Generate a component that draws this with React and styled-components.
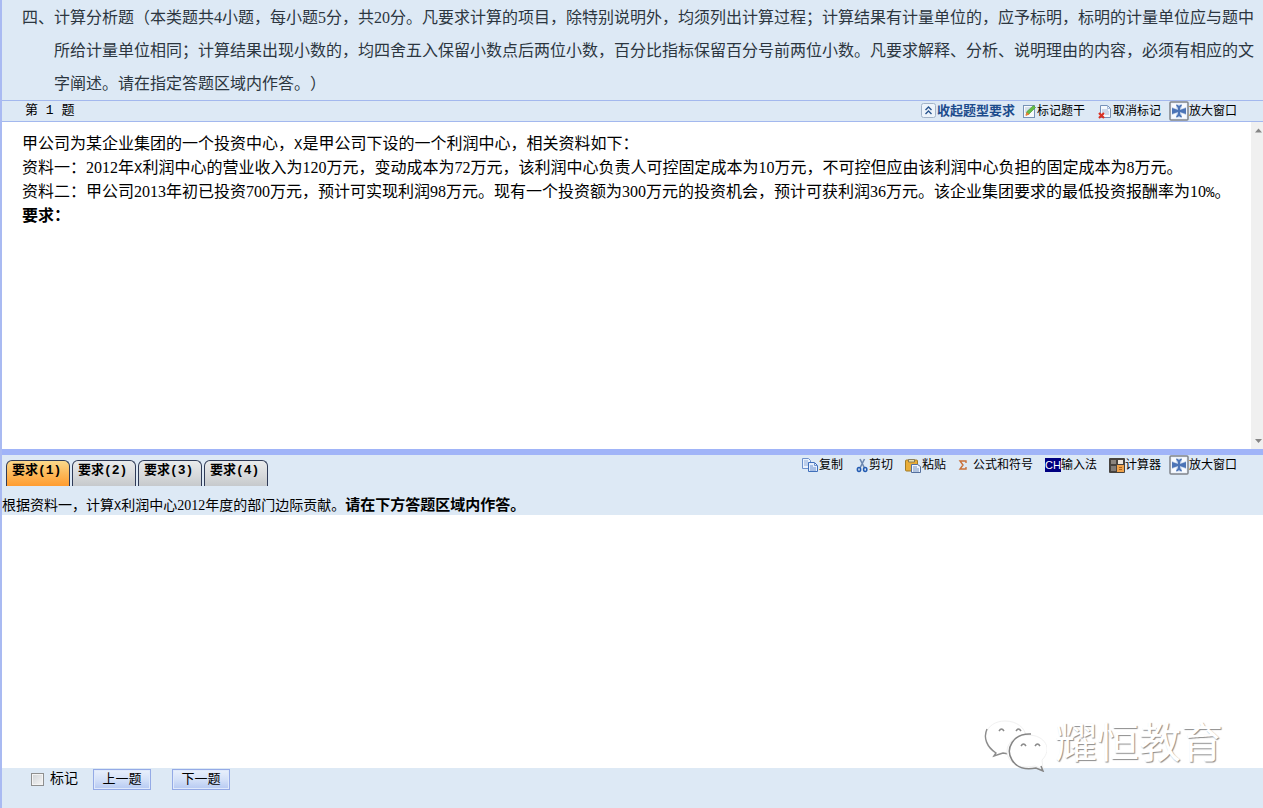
import React from 'react';
import styled, { createGlobalStyle, css } from 'styled-components';

const cjk = '"Liberation Serif", "Noto Sans CJK SC", sans-serif';
const mono = '"Liberation Mono", "Noto Sans CJK SC", sans-serif';

const Global = createGlobalStyle`
  * { box-sizing: border-box; }
  body {
    margin: 0;
    background: #dde9f5;
    color: #000;
    font-family: ${cjk};
    text-spacing-trim: space-all;
  }
  button, input, textarea { font-family: inherit; color: inherit; margin: 0; }
`;

const Page = styled.main`
  display: flex;
  flex-direction: column;
  min-height: 100vh;
  border-left: 2px solid #a9baf2;
  background: #dde9f5;
`;

const Intro = styled.header`
  padding: 1px 8px 0 52px;
  font-size: 16px;
  line-height: 33px;
  color: #2c3640;
  p { margin: 0; text-indent: -32px; }
`;

const QuestionBar = styled.div`
  display: flex;
  justify-content: space-between;
  align-items: center;
  height: 22px;
  border: solid #a3b8ee;
  border-width: 1px 0;
  padding: 0 26px 0 23px;
`;

const QuestionNo = styled.h1`
  margin: 0;
  font: 400 13px/20px ${mono};
`;

const Tools = styled.div`
  display: flex;
  align-items: center;
  gap: ${(p) => p.$gap};
`;

const Tool = styled.button`
  display: flex;
  align-items: center;
  height: 20px;
  gap: ${(p) => p.$space || '1px'};
  padding: 0;
  border: 0;
  background: none;
  font-size: 12px;
  line-height: 20px;
  white-space: nowrap;
  ${(p) => p.$strong && css`
    color: #1d4c8c;
    font-size: 13px;
    font-weight: 700;
  `}
  svg { display: block; flex: none; }
`;

const Material = styled.section`
  display: flex;
  flex: 327 1 0;
  background: #fff;
`;

const MaterialText = styled.div`
  flex: 1;
  padding: 10px 8px 10px 20px;
  font-size: 16px;
  line-height: 24px;
  p { margin: 0; }
`;

const Latin = styled.span`
  font-family: "Liberation Mono", monospace;
  font-size: ${(p) => (p.$small ? '12px' : '14px')};
  line-height: 1;
`;

const ScrollRail = styled.div`
  display: flex;
  flex-direction: column;
  justify-content: space-between;
  align-items: center;
  width: 12px;
  padding: 6px 0 5px 3px;
  background: #f0f0f0;
  svg { display: block; }
`;

const Splitter = styled.div`
  height: 6px;
  background: #a0b4f8;
`;

const AnswerBar = styled.div`
  display: flex;
  justify-content: space-between;
  align-items: flex-start;
  height: 40px;
  padding: 0 26px 0 4px;
`;

const Tabs = styled.div`
  display: flex;
  gap: 2px;
  padding-top: 5px;
`;

const Tab = styled.button`
  width: 64px;
  height: 26px;
  padding: 0 0 6px 5px;
  border: 1px solid #2f3b57;
  border-bottom: 0;
  border-radius: 6px 6px 0 0;
  background: ${(p) => (p.$active
    ? 'linear-gradient(#fbd98c, #fdb95a 50%, #ff9c30)'
    : 'linear-gradient(#e9ebec, #d6d8da 60%, #c6c9cc)')};
  font: 700 13px/18px ${mono};
  text-align: left;
  white-space: nowrap;
`;

const Prompt = styled.label`
  display: block;
  height: 20px;
  font-size: 14px;
  line-height: 20px;
  strong { font-size: 15px; }
`;

const AnswerArea = styled.div`
  position: relative;
  display: flex;
  flex: 253 1 0;
`;

const Answer = styled.textarea`
  flex: 1;
  border: 0;
  padding: 8px;
  outline: 0;
  resize: none;
  background: #fff;
  font-size: 14px;
`;

const Watermark = styled.div`
  position: absolute;
  right: 40px;
  bottom: -4px;
  display: flex;
  align-items: flex-start;
  gap: 8px;
  color: #fff;
  font: 400 42px/48px "Noto Sans CJK SC", sans-serif;
  text-shadow: 1px 1px 1px #8c8c8c;
  pointer-events: none;
  svg { display: block; }
`;

const Footer = styled.footer`
  display: flex;
  align-items: flex-start;
  height: 40px;
  padding: 1px 0 0 29px;
  font-size: 14px;
`;

const Mark = styled.label`
  display: flex;
  align-items: center;
  gap: 6px;
  width: 62px;
  height: 20px;
  line-height: 20px;
`;

const Check = styled.input`
  appearance: none;
  width: 13px;
  height: 13px;
  border: 1px solid #8e8f8f;
  background: linear-gradient(135deg, #cfd3d6, #f6f6f6);
  box-shadow: inset 0 0 0 1px #f4f4f4;
  &:checked { background: #4a6fb5; }
`;

const NavButton = styled.button`
  width: 58px;
  height: 21px;
  margin-right: 21px;
  padding: 0 0 2px;
  border: 1px solid #94aae6;
  background: linear-gradient(#e9f0fc, #d4e1f8 50%, #b6c9f2);
  box-shadow: inset 0 0 0 1px #dfe9fb;
  font-size: 13px;
  line-height: 17px;
`;

const CollapseIcon = () => (
  <svg width="15" height="16" viewBox="0 0 15 16">
    <rect x=".5" y=".5" width="14" height="14" rx="2" fill="#edf4fb" stroke="#a3b4c8" />
    <path d="M4.500 7l3-3 3 3M4.500 11l3-3 3 3" fill="none" stroke="#29558f" strokeWidth="1.400" />
  </svg>
);

const MarkIcon = () => (
  <svg width="13" height="14" viewBox="0 0 13 14">
    <rect x=".5" y="1.500" width="11" height="12" fill="#f8fafc" stroke="#7792b5" />
    <path d="M2 4h7M2 6h5M2 8h3" stroke="#b6c6dc" />
    <path d="M3 11l1-3.500L10.500 1.500l2 2L6 10z" fill="#63bd45" stroke="#4f9a3d" strokeWidth=".7" />
    <path d="M2.500 12l1.200-4L6.500 10.500z" fill="#ef7a35" />
  </svg>
);

const UnmarkIcon = () => (
  <svg width="14" height="15" viewBox="0 0 14 15">
    <path d="M2.500 1.500h7l3 3v9h-10z" fill="#f4f8fd" stroke="#7691b8" />
    <path d="M9.500 1.500v3h3M4 6h6M4 8h7M7 10h4" fill="none" stroke="#a5b9d7" />
    <path d="M1 9l5 5M6 9l-5 5" stroke="#d93224" strokeWidth="2.200" />
  </svg>
);

const ExpandIcon = () => (
  <svg width="20" height="20" viewBox="0 0 20 20">
    <rect x="1" y="1" width="18" height="18" rx="1" fill="#eef3fa" stroke="#80848b" strokeWidth="1.500" />
    <rect x="3" y="3" width="14" height="14" fill="#b9cbe6" />
    <path d="M3 3h4v2l1 3-3-1-2-1zM17 3h-4v2l-1 3 3-1 2-1zM3 17h4v-2l1-3-3 1-2 1zM17 17h-4v-2l-1-3 3 1 2 1z" fill="#f9fbff" />
    <path d="M3 7l3 1 3 1V7L7 4h6l-2 3v2l3-1 3-1v6l-3-1-3-1v2l2 3H7l2-3v-2l-3 1-3 1z" fill="#4c74b6" />
    <path d="M8 3h4l-2 2zM8 17h4l-2-2z" fill="#dfe9f7" />
  </svg>
);

const CopyIcon = () => (
  <svg width="16" height="14" viewBox="0 0 16 14">
    <path d="M.5 .5h6l2 2v8h-8z" fill="#eaf2fd" stroke="#6d91cc" />
    <path d="M2 3h4M2 5h5M2 7h4" stroke="#91add9" />
    <path d="M6.500 4.500h6l3 3v6h-9z" fill="#e5effd" stroke="#3f6fba" />
    <path d="M12.500 4.500v3h3M8 8h3M8 10h6M8 12h6" fill="none" stroke="#6a90ce" />
  </svg>
);

const CutIcon = () => (
  <svg width="13" height="15" viewBox="0 0 13 15">
    <path d="M5 1l4.500 9M9.500 1L5 10" stroke="#6c88b0" strokeWidth="1.600" />
    <ellipse cx="4" cy="11.500" rx="1.600" ry="2" fill="none" stroke="#245cb2" strokeWidth="1.600" />
    <ellipse cx="10.200" cy="11.500" rx="1.600" ry="2" fill="none" stroke="#245cb2" strokeWidth="1.600" />
  </svg>
);

const PasteIcon = () => (
  <svg width="16" height="15" viewBox="0 0 16 15">
    <rect x=".5" y="2" width="12" height="11" rx="1" fill="#e9ad37" stroke="#a17b27" />
    <path d="M3.500 4V1.500h6V4z" fill="#e8dfae" stroke="#75694a" strokeWidth=".8" />
    <path d="M6.500 6.500h6l3 2v6h-9z" fill="#eef4fd" stroke="#536f9e" />
    <path d="M8 9h4M8 11h6M8 13h6" stroke="#7593c0" />
  </svg>
);

const SumIcon = () => (
  <svg width="10" height="12" viewBox="0 0 10 12">
    <path d="M8 4V2H2l3 4-3 4h6V8" fill="none" stroke="#c9703a" strokeWidth="1.400" />
  </svg>
);

const ImeBadge = styled.span`
  width: 16px;
  height: 14px;
  background: #000080;
  color: #fff;
  font: 400 11px/14px "Liberation Sans", sans-serif;
  text-align: center;
`;

const CalcIcon = () => (
  <svg width="16" height="15" viewBox="0 0 16 15">
    <rect width="16" height="15" rx="1" fill="#47433f" />
    <rect x="2" y="2" width="5" height="4" fill="#8a847e" />
    <rect x="9" y="2" width="5" height="4" fill="#eee6dc" />
    <rect x="2" y="8" width="5" height="5" fill="#807b77" />
    <rect x="8" y="7" width="7" height="7" fill="#f0a24a" />
    <path d="M10 9.500h3M10 11.500h3" stroke="#a4601c" />
  </svg>
);

const ChatLogo = () => (
  <svg width="64" height="56" viewBox="0 0 64 56" fill="none">
    <path d="M12 37C-5 26 2 5 22 5c12 0 20 7 21 15C31 19 23 28 25 38l-8-1-7 4z" fill="#fff" stroke="#f1f1f1" />
    <path d="M4 13c-4 9 0 18 9 24l-2 3 9-3 6 1" stroke="#8c8c8c" strokeWidth="1.400" />
    <path d="M59 44c11-11 3-25-14-25S18 34 28 45c6 6 14 7 24 5l8 3z" fill="#fff" stroke="#f1f1f1" />
    <path d="M48 18c-18-1-26 15-19 26 5 8 14 10 24 8l7 3-2-5" stroke="#858585" strokeWidth="1.500" />
    <path d="M16 15q2.500-4 5 0M33 15q2.500-4 5 0M38 30q2.500-4 5 0M52 30q2.500-4 5 0" stroke="#8a8a8a" strokeWidth="1.500" />
  </svg>
);

const Arrow = ({ down }) => (
  <svg width="7" height="5" viewBox="0 0 7 5">
    <path d={down ? 'M0 0h7L3.500 4z' : 'M0 4.500h7L3.500 .5z'} fill="#858585" />
  </svg>
);

export default function App() {
  return (
    <>
      <Global />
      <Page lang="zh-CN">
        <Intro>
          <p>四、计算分析题（本类题共4小题，每小题5分，共20分。凡要求计算的项目，除特别说明外，均须列出计算过程；计算结果有计量单位的，应予标明，标明的计量单位应与题中所给计量单位相同；计算结果出现小数的，均四舍五入保留小数点后两位小数，百分比指标保留百分号前两位小数。凡要求解释、分析、说明理由的内容，必须有相应的文字阐述。请在指定答题区域内作答。）</p>
        </Intro>
        <QuestionBar>
          <QuestionNo>第 1 题</QuestionNo>
          <Tools $gap="8px">
            <Tool $strong><CollapseIcon />收起题型要求</Tool>
            <Tools $gap="13px">
              <Tool><MarkIcon />标记题干</Tool>
              <Tool><UnmarkIcon />取消标记</Tool>
            </Tools>
            <Tool $space="0"><ExpandIcon />放大窗口</Tool>
          </Tools>
        </QuestionBar>
        <Material>
          <MaterialText>
            <p>甲公司为某企业集团的一个投资中心，<Latin>X</Latin>是甲公司下设的一个利润中心，相关资料如下：</p>
            <p>资料一：2012年<Latin>X</Latin>利润中心的营业收入为120万元，变动成本为72万元，该利润中心负责人可控固定成本为10万元，不可控但应由该利润中心负担的固定成本为8万元。</p>
            <p>资料二：甲公司2013年初已投资700万元，预计可实现利润98万元。现有一个投资额为300万元的投资机会，预计可获利润36万元。该企业集团要求的最低投资报酬率为10<Latin>%</Latin>。</p>
            <p><strong>要求：</strong></p>
          </MaterialText>
          <ScrollRail><Arrow /><Arrow down /></ScrollRail>
        </Material>
        <Splitter />
        <AnswerBar>
          <Tabs>
            <Tab $active>要求(1)</Tab>
            <Tab>要求(2)</Tab>
            <Tab>要求(3)</Tab>
            <Tab>要求(4)</Tab>
          </Tabs>
          <Tools $gap="8px">
            <Tools $gap="12px">
              <Tool><CopyIcon />复制</Tool>
              <Tool><CutIcon />剪切</Tool>
              <Tool><PasteIcon />粘贴</Tool>
              <Tool $space="5px"><SumIcon />公式和符号</Tool>
              <Tool $space="0"><ImeBadge>CH</ImeBadge>输入法</Tool>
              <Tool $space="0"><CalcIcon />计算器</Tool>
            </Tools>
            <Tool $space="0"><ExpandIcon />放大窗口</Tool>
          </Tools>
        </AnswerBar>
        <Prompt htmlFor="answer">
          根据资料一，计算<Latin $small>X</Latin>利润中心2012年度的部门边际贡献。<strong>请在下方答题区域内作答。</strong>
        </Prompt>
        <AnswerArea>
          <Answer id="answer" />
          <Watermark><ChatLogo />耀恒教育</Watermark>
        </AnswerArea>
        <Footer>
          <Mark><Check type="checkbox" />标记</Mark>
          <NavButton>上一题</NavButton>
          <NavButton>下一题</NavButton>
        </Footer>
      </Page>
    </>
  );
}
